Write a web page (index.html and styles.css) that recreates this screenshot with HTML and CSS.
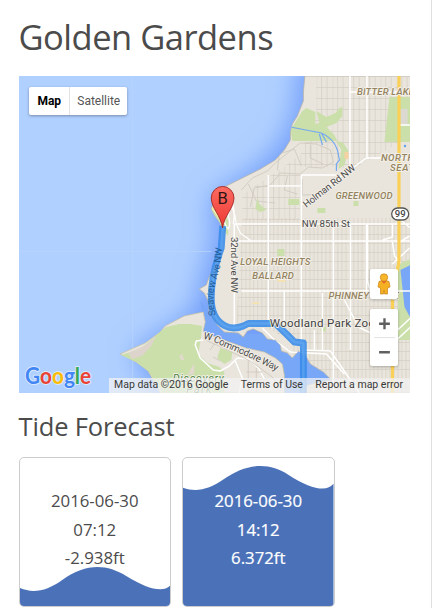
FILE: index.html
```html
<!DOCTYPE html>
<html lang="en">
<head>
<meta charset="utf-8">
<title>Golden Gardens</title>
<link rel="stylesheet" href="styles.css">
</head>
<body>
<main class="page">
  <h1 class="title">Golden Gardens</h1>
  <section class="map">
    <svg class="map-canvas" viewBox="19 76 390.5 316.5" preserveAspectRatio="none">
      <defs>
        <pattern id="blocks" width="16" height="11" patternUnits="userSpaceOnUse" x="268" y="76">
          <path d="M0 0V11M5.3 0V11M10.6 0V11M0 .5H16" class="block-line"/>
        </pattern>
        <pattern id="dense" width="16" height="18" patternUnits="userSpaceOnUse" x="301" y="243">
          <path d="M.5 0V18M4.5 0V18M8.5 0V18M12.5 0V18M0 .5H16M0 9.5H16" class="block-line"/>
        </pattern>
        <filter id="soft" x="-30%" y="-30%" width="160%" height="160%"><feGaussianBlur stdDeviation="13"/></filter>
        <linearGradient id="pin" x1="0" y1="0" x2="0" y2="1"><stop offset="0" stop-color="#fb6b62"/><stop offset="1" stop-color="#ed3832"/></linearGradient>
        <clipPath id="land-clip"><path id="land" d="M304.5 76L303 92L303 101L297 116L292 124L290 133L290 140L284 150L275 160L260 169L240 179L226 186L216 194L211 209L214 215L220 223L223 232L221 249L215 265L209 277L206 285L199 289L204 293L208 301L209 312L217 325L224 332L238 333L243 337L247 331L253 329L262 333L267 339L275 340L280 345L281 351L287 353L292 358L298 351L306 357L310 364L323 372L331 380L315 383L305 386L306 393H410V76Z"/></clipPath>
        <path id="way" d="M203 339Q212 340 224 347L248 357L276 371"/>
        <path id="seaview" d="M215.5 315Q212 302 214 288L220 266L224 230"/>
      </defs>
      <rect x="19" y="76" width="391" height="317" fill="#b0d0ff"/>
      <path d="M299 60L294 110L281 142L257 167L210 197L213 240L201 278L195 306L182 319L157 335L132 353L160 400H320V393L420 360V60Z" fill="#739ffa" filter="url(#soft)"/>
      <path d="M132.500 76V393M19 251.5H211" class="tile"/>
      <path d="M200 300L215 320L230 333L290 335L310 360L335 378V393H280L260 352L205 332Z" fill="#78a7f8"/>
      <use href="#land" class="land"/>
      <g clip-path="url(#land-clip)">
        <path d="M316 76H410V135L375 157L350 170L335 167H300V220H242V195L300 155L316 115Z" fill="url(#blocks)"/>
        <path d="M242 218H410V393H300L290 340L262 326H236Z" fill="url(#dense)"/>
        <path d="M241 190L252 178L267 171L275 163L291 150L300 143L316 144L330 150L333 162L322 168L308 167L300 174L280 173L270 185L254 188L250 207M277 170L279 154L294 149L301 166M310 145V158L323 164M248 184L256 201L275 203M287 176L284 190L297 194M302 179V195L326 194" class="lane"/>
        <path d="M302 111L306 108L315 112V124L319 123L316 111L326 117L335 113L339 108L342 107V116L336 123L326 127L334 135L337 141L343 143L348 151L344 165L338 169L341 150L336 141L292 141L290 130Z" class="park"/>
        <path d="M389 97H410V142H384Z" class="park"/>
        <path d="M211 209L219 205L228 220L228 236L223 230Z" class="park"/>
        <path d="M211 208L218 205L222 212L221 222Z" fill="#f1edaf"/>
        <path d="M257 198L259 204L266 210L260 212L255 209ZM288 199H299V205H288ZM317 208H325V213H317ZM277 249H284V256H277ZM353 201H358V206H353ZM396 265L410 259V340H392L398 328ZM319 330L326 326L325 332Z" class="park"/>
        <path d="M344 152H348V159H344Z" fill="#f5d2a2"/>
        <path d="M252 302H259V304H252ZM277 279H285V282H277Z" fill="#f4e2b3"/>
        <path d="M400 270L410 265V318L404 307Z" fill="#78a7f8"/>
        <rect x="400" y="109" width="7" height="16" fill="#dcd8d2"/>
        <circle cx="404.500" cy="146" r="1.200" fill="#62a2ec"/>
        <path d="M290 127L321 133Q333 138 337 150L339 160L336 164V171M319 134L322 145M321 133L326 142" class="stream"/>
        <path d="M349.500 76V166M366.500 76V159M349 92H410M366 158H410M399 125H410M301 175V326M301 175H337M268 175V327M268 186H300M234 224H410M234 241H410M234 224V329M301 205L366 158M241 291H410M333 224V392M350 224V350M366 224V291M284 291V332M392 224V237L382 240M367 224V281L372 296M392 242L394 256L400 263M344 300L358 327L370 333H394L410 318M322 293V351M301 326V350L330 351L359 393M314 330V350M262 328L274 340L290 352L326 354L344 374M392 264L409 248M398 243L409 236M400 220L410 228M394 342L410 327" class="road"/>
        <path d="M222.500 193Q234 205 236 224L240 233L251 241M230 195Q236 211 233 224M222 193Q232 203 228 216Q231 224 228 229Q221 222 227 211" class="road thin"/>
      </g>
      <path d="M120 354L145 343L160 332L165 326L184 316L203 312L205 322L203 331L208 334L224 340L246 348L264 352L275 358L282 364L284 375V393H160L148 371L136 362Z" fill="#e9e4dc" stroke="#c7c2a2" stroke-width=".7"/>
      <path d="M160 332L166 327L179 324H190L202 326L200 342L198 354L207 363L219 367L224 372V393H162L148 371L136 362L121 355L140 349ZM220 348L232 352L231 360L224 364L217 358Z" class="park"/>
      <path d="M128 353L144 346L156 336L151 346L142 356L132 359Z" fill="#ddd5cb"/>
      <path d="M179 356L182 354L184 360L181 360ZM190 370L194 363V374L187 375Z" fill="#e1dacc"/>
      <path d="M203 340L196 341L195 345L200 358L213 370L220 371L229 366L237 358L249 359L258 368L270 390M239 393L242 378L235 361" class="road"/>
      <path d="M207 341L221 347L250 361L272 377L282 391M210 350L216 341M213 357L220 361M246 372H262M243 380H268M248 361V393M256 368V393" class="lane"/>
      <path d="M398.500 76V260Q398 271 392 281V393" class="highway"/>
      <path d="M222.500 226L221 248Q211 275 211 298Q211 319 225 326Q233 330 243 326L248 323.500H275L284 332L294 342L303 343V393" class="route"/>
      <path d="M222.500 226L221 248Q211 275 211 298Q211 319 225 326Q233 330 243 326L248 323.500H275L284 332L294 342L303 343V393" class="route-core"/>
      <g class="area">
        <text x="356.500" y="95.500" textLength="57">BITTER LAKE</text>
        <text x="380.500" y="161" textLength="33">NORTH</text>
        <text x="389.500" y="171" textLength="42">SEATTLE</text>
        <text x="335" y="199" textLength="57">GREENWOOD</text>
        <text x="240" y="265" textLength="70">LOYAL HEIGHTS</text>
        <text x="252" y="279.500" textLength="41.500">BALLARD</text>
        <text x="328" y="299.500" textLength="70">PHINNEY RIDGE</text>
      </g>
      <g class="street">
        <text x="301.500" y="227" textLength="48">NW 85th St</text>
        <text transform="translate(306 208) rotate(-38)" textLength="63">Holman Rd NW</text>
        <text transform="translate(230.500 237) rotate(90)" textLength="56">32nd Ave NW</text>
        <text><textPath href="#way" textLength="80">W Commodore Way</textPath></text>
        <text class="on-route"><textPath href="#seaview" textLength="68">Seaview Ave NW</textPath></text>
      </g>
      <text x="269.500" y="327" textLength="105" class="place">Woodland Park Zoo</text>
      <g class="discovery"><text x="172.500" y="382" textLength="51">Discovery</text><text x="186" y="393" textLength="25">Park</text></g>
      <rect x="391.200" y="208" width="17" height="12" rx="6" fill="#fff" stroke="#555" stroke-width="1.300"/>
      <text x="399.800" y="217.500" text-anchor="middle" class="shield">99</text>
      <path d="M222.300 228C221 216 211 208 211 198A11.300 11.500 0 0 1 233.700 198C233.700 208 223.600 216 222.300 228Z" fill="url(#pin)" stroke="#9f2927" stroke-width=".9"/>
      <text x="222.300" y="204.500" text-anchor="middle" class="pin-letter">B</text>
      <text x="25" y="384.500" textLength="66" lengthAdjust="spacingAndGlyphs" class="logo"><tspan fill="#4285f4">G</tspan><tspan fill="#ea4335">o</tspan><tspan fill="#fbbc05">o</tspan><tspan fill="#4285f4">g</tspan><tspan fill="#34a853">l</tspan><tspan fill="#ea4335">e</tspan></text>
    </svg>
    <div class="map-type"><span class="type active">Map</span><span class="type">Satellite</span></div>
    <div class="controls">
      <div class="control person">
        <svg width="16" height="22" viewBox="0 0 16 22"><path d="M3 8.500Q8 5.500 13 8.500L14 14L11.500 15V21H8.500L8 17L7.500 21H4.500V15L2 14Z" fill="#f5b023" stroke="#c98416" stroke-width=".7"/><circle cx="8" cy="4.500" r="3.700" fill="#f9b62b" stroke="#c98416" stroke-width=".7"/><path d="M5.500 8L8 11L10.500 8Z" fill="#e46b2d"/></svg>
      </div>
      <div class="control zoom">
        <svg width="28" height="58" viewBox="0 0 28 58"><path d="M9 15H20M14.500 9.500V20.500M9 44H20" stroke="#606060" stroke-width="2.400"/><path d="M4 29H25" stroke="#e2e2e2"/></svg>
      </div>
    </div>
    <div class="attribution"><span>Map data ©2016 Google</span><span>Terms of Use</span><span>Report a map error</span></div>
  </section>
  <h2 class="subtitle">Tide Forecast</h2>
  <section class="tides">
    <article class="tide">
      <svg class="wave" viewBox="0 0 151 149" preserveAspectRatio="none"><path d="M0 131C14 137 28 133 42 123C66 106 86 106 107 119C128 132 144 136 151 128V149H0Z"/></svg>
      <div class="reading"><span>2016-06-30</span><span>07:12</span><span>-2.938ft</span></div>
    </article>
    <article class="tide high">
      <svg class="wave" viewBox="0 0 151 149" preserveAspectRatio="none"><path d="M0 30C14 35 27 31 40 22C64 5 86 4 106 17C128 31 144 35 151 26V149H0Z"/></svg>
      <div class="reading"><span>2016-06-30</span><span>14:12</span><span>6.372ft</span></div>
    </article>
  </section>
</main>
</body>
</html>
```
FILE: styles.css
```css
* { box-sizing: border-box; }
body { margin: 0; background: #fff; color: #4b4b4b; font-family: "Open Sans", sans-serif; }
.page { width: 432px; height: 608px; overflow: hidden; padding: 13px 20.5px 0 18.5px; border-right: 1.5px solid #e0e0e0; }
.title { margin: 0; height: 63px; font-size: 34.5px; letter-spacing: -.5px; line-height: 48px; font-weight: 400; white-space: nowrap; }
.map { position: relative; width: 391px; height: 316.5px; overflow: hidden; font-family: Roboto, sans-serif; }
.map-canvas { display: block; width: 100%; height: 100%; }
.tile { stroke: #bad4fa; stroke-width: .7; fill: none; }
.land { fill: #e9e5dc; stroke: #b9b4a8; stroke-width: .8; }
.block-line { fill: none; stroke: #d2ccc2; stroke-width: .65; }
.lane { fill: none; stroke: #d0cabf; stroke-width: .9; }
.park { fill: #cadfaa; }
.stream { fill: none; stroke: #73a8f2; stroke-width: 1.2; }
.road { fill: none; stroke: #fff; stroke-width: 1.5; stroke-linejoin: round; }
.thin { stroke-width: 1.2; }
.highway { fill: none; stroke: #fbd056; stroke-width: 3.2; }
.route { fill: none; stroke: #388be8; stroke-width: 6.8; stroke-linejoin: round; opacity: .88; }
.route-core { fill: none; stroke: #69b0f8; stroke-width: 2.5; stroke-linejoin: round; opacity: .5; }
.map-canvas text { paint-order: stroke; stroke: #f3f0e9; stroke-width: 1.8px; stroke-linejoin: round; }
.area { font-size: 9.6px; font-style: italic; font-weight: 500; fill: #938360; }
.street { font-size: 9.8px; fill: #494949; }
.map-canvas .on-route { stroke: none; fill: #235b96; font-size: 9.5px; }
.place { font-size: 11.5px; fill: #414141; }
.discovery { font-size: 10.8px; font-style: italic; fill: #4d8442; }
.map-canvas .shield { font-size: 9.5px; font-weight: 500; fill: #444; stroke: none; }
.map-canvas .pin-letter { font-size: 16.5px; fill: #301514; stroke: none; }
.map-canvas .logo { font-family: Lato, sans-serif; font-size: 22px; font-weight: 700; stroke: #d9e8ff; stroke-width: 2px; }
.map-type { position: absolute; left: 10.5px; top: 11px; height: 28px; display: flex; background: #fff; border-radius: 2px; box-shadow: 0 1px 3px #0005; font-size: 12px; line-height: 28px; color: #555; }
.type { width: 57.5px; padding-left: 1px; text-align: center; }
.type.active { width: 40.5px; color: #000; font-weight: 700; border-right: 1px solid #e3e3e3; }
.controls { position: absolute; right: 11.5px; top: 193px; display: flex; flex-direction: column; gap: 10px; }
.control { width: 28.5px; background: #fff; border-radius: 2px; box-shadow: 0 1px 3px #0004; }
.person { height: 30px; display: flex; align-items: center; justify-content: center; }
.zoom { height: 57px; }
.zoom svg { display: block; height: 57px; }
.attribution { position: absolute; right: 0; bottom: 0; height: 14.5px; width: 301px; padding: 0 6.5px 0 5.5px; display: flex; justify-content: space-between; background: #f3f3f3bb; color: #393939; font-size: 10.5px; line-height: 14.5px; white-space: nowrap; }
.subtitle { margin: 15.5px 0 0; height: 49px; font-size: 25.5px; letter-spacing: -.15px; line-height: 36px; font-weight: 400; }
.tides { display: flex; gap: 11px; }
.tide { position: relative; width: 152.5px; height: 150px; overflow: hidden; border: 1.5px solid #ccc; border-radius: 5px; }
.wave { position: absolute; inset: 0; width: 100%; height: 100%; fill: #4b72b9; }
.reading { position: relative; display: flex; flex-direction: column; align-items: center; padding-top: 29px; font-size: 16.8px; line-height: 28.5px; }
.high .reading { color: #fff; -webkit-text-stroke: .2px #fff; }
```
